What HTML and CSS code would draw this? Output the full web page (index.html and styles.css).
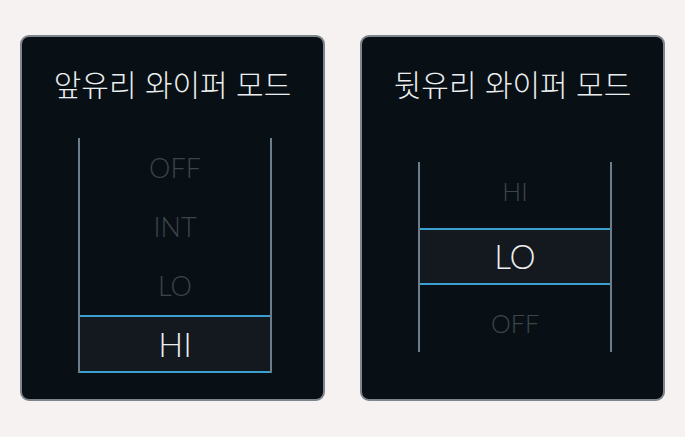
FILE: index.html
```html
<!DOCTYPE html>
<html lang="ko">
<head>
    <meta charset="UTF-8">
    <meta name="viewport" content="width=device-width, initial-scale=1.0">
    <title>와이퍼 모드</title>
    <link rel="stylesheet" href="styles.css">
</head>
<body>
    <div class="wrap">
        <!-- 앞유리 -->
        <div class="card front">
            <div class="title">앞유리 와이퍼 모드</div>
            <div class="list">
                <div class="item">OFF</div>
                <div class="item">INT</div>
                <div class="item">LO</div>
                <div class="item on">HI</div>
            </div>
        </div>
        <!-- 뒷유리 -->
        <div class="card rear">
            <div class="title">뒷유리 와이퍼 모드</div>
            <div class="list">
                <div class="item top">HI</div>
                <div class="item on">LO</div>
                <div class="item bottom">OFF</div>
            </div>
        </div>
    </div>
</body>
</html>
```

FILE: styles.css
```css
body
{
    margin: 0;
    background-color: #f5f2f1;
    font-family: "Lato", "Noto Sans CJK KR", sans-serif;
}
div.wrap
{
    display: flex;
    gap: 35px;
    padding: 35px 20px 0 20px;
}
div.wrap div.card
{
    width: 301px;
    height: 362px;
    border: 2px solid #7f868b;
    border-radius: 9px;
    background-color: #081015;
}
div.wrap div.card div.title
{
    margin-top: 26px;
    height: 40px;
    line-height: 40px;
    text-align: center;
    font-family: "Noto Sans CJK KR", sans-serif;
    font-size: 30px;
    font-weight: 300;
    color: #eceef0;
}
/* 가운데 목록, 좌우 세로 선 */
div.wrap div.card div.list
{
    width: 190px;
    margin: 35px 0 0 56px;
    border-left: 2px solid #6b7e89;
    border-right: 2px solid #6b7e89;
}
div.wrap div.card div.list div.item
{
    height: 59px;
    line-height: 59px;
    text-align: center;
    font-size: 27px;
    font-weight: 300;
    color: #3d454b;
}
div.wrap div.card div.list div.item.on
{
    box-sizing: border-box;
    height: 58px;
    line-height: 54px;
    border-top: 2px solid #3c9fd0;
    border-bottom: 2px solid #3c9fd0;
    background-color: #13191e;
    font-size: 33px;
    color: #eceef0;
}
div.wrap div.card.rear div.list
{
    margin-top: 59px;
}
div.wrap div.card.rear div.list div.item
{
    font-size: 25px;
}
div.wrap div.card.rear div.list div.item.on
{
    height: 57px;
    line-height: 53px;
    font-size: 33px;
}
div.wrap div.card.rear div.list div.item.top
{
    height: 66px;
    line-height: 58px;
}
div.wrap div.card.rear div.list div.item.bottom
{
    height: 67px;
    line-height: 76px;
}
```
